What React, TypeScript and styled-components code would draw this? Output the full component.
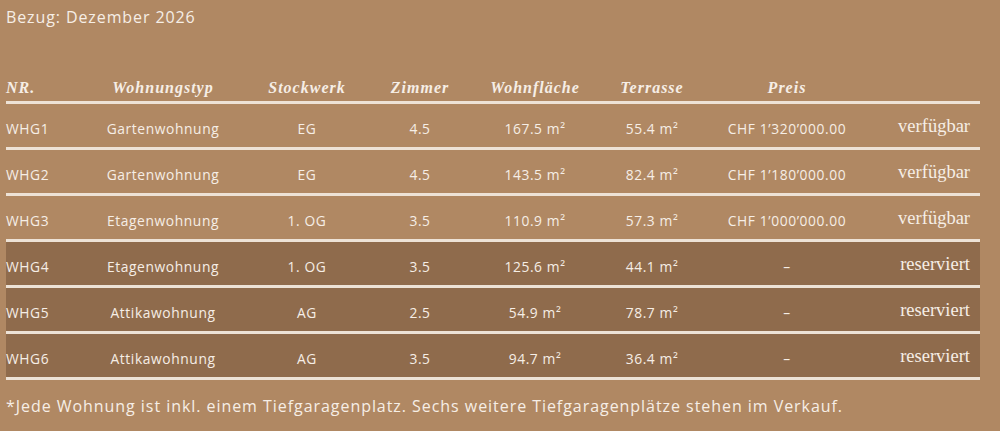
import React from 'react';
import styled, { createGlobalStyle } from 'styled-components';

type Unit = {
  nr: string;
  typ: string;
  stock: string;
  zimmer: string;
  flaeche: string;
  terrasse: string;
  preis: string;
  status: string;
  reserved?: boolean;
};

const units: Unit[] = [
  { nr: 'WHG1', typ: 'Gartenwohnung', stock: 'EG', zimmer: '4.5', flaeche: '167.5 m²', terrasse: '55.4 m²', preis: 'CHF 1’320’000.00', status: 'verfügbar' },
  { nr: 'WHG2', typ: 'Gartenwohnung', stock: 'EG', zimmer: '4.5', flaeche: '143.5 m²', terrasse: '82.4 m²', preis: 'CHF 1’180’000.00', status: 'verfügbar' },
  { nr: 'WHG3', typ: 'Etagenwohnung', stock: '1. OG', zimmer: '3.5', flaeche: '110.9 m²', terrasse: '57.3 m²', preis: 'CHF 1’000’000.00', status: 'verfügbar' },
  { nr: 'WHG4', typ: 'Etagenwohnung', stock: '1. OG', zimmer: '3.5', flaeche: '125.6 m²', terrasse: '44.1 m²', preis: '–', status: 'reserviert', reserved: true },
  { nr: 'WHG5', typ: 'Attikawohnung', stock: 'AG', zimmer: '2.5', flaeche: '54.9 m²', terrasse: '78.7 m²', preis: '–', status: 'reserviert', reserved: true },
  { nr: 'WHG6', typ: 'Attikawohnung', stock: 'AG', zimmer: '3.5', flaeche: '94.7 m²', terrasse: '36.4 m²', preis: '–', status: 'reserviert', reserved: true },
];

const App = () => {
  return (
    <>
      <GlobalStyle />
      <Page>
        <Bezug>Bezug: Dezember 2026</Bezug>

        <Table>
          <HeaderRow>
            <HeadCell $align="left">NR.</HeadCell>
            <HeadCell>Wohnungstyp</HeadCell>
            <HeadCell>Stockwerk</HeadCell>
            <HeadCell>Zimmer</HeadCell>
            <HeadCell>Wohnfläche</HeadCell>
            <HeadCell>Terrasse</HeadCell>
            <HeadCell>Preis</HeadCell>
            <HeadCell />
          </HeaderRow>

          {units.map((u) => (
            <Row key={u.nr} $reserved={u.reserved}>
              <Cell $align="left">{u.nr}</Cell>
              <Cell>{u.typ}</Cell>
              <Cell>{u.stock}</Cell>
              <Cell>{u.zimmer}</Cell>
              <Cell>{u.flaeche}</Cell>
              <Cell>{u.terrasse}</Cell>
              <Cell>{u.preis}</Cell>
              <Status>{u.status}</Status>
            </Row>
          ))}
        </Table>

        <Note>
          *Jede Wohnung ist inkl. einem Tiefgaragenplatz. Sechs weitere Tiefgaragenplätze stehen im Verkauf.
        </Note>
      </Page>
    </>
  );
};

export default App;

/* Styled Components */
const GlobalStyle = createGlobalStyle`
  html, body {
    margin: 0;
    padding: 0;
    background: #b08863;
  }
`;

const Page = styled.div`
  width: 1000px;
  height: 431px;
  box-sizing: border-box;
  padding: 6px 20px 0 6px;
  background: #b08863;
  color: #f6eee6;
  font-family: 'Open Sans', 'Noto Sans', sans-serif;
  overflow: hidden;
`;

const Bezug = styled.div`
  font-size: 16px;
  line-height: 22px;
  letter-spacing: 0.9px;
`;

const Table = styled.div`
  margin-top: 47px;
  width: 974px;
`;

const cols = '85px 144px 144px 82px 148px 86px 184px 101px';

const HeaderRow = styled.div`
  display: grid;
  grid-template-columns: ${cols};
  align-items: end;
  height: 26px;
  border-bottom: 3px solid #ede2d6;
`;

const HeadCell = styled.div<{ $align?: string }>`
  font-family: 'Liberation Serif', 'Times New Roman', serif;
  font-style: italic;
  font-weight: 700;
  font-size: 16px;
  letter-spacing: 1px;
  line-height: 26px;
  padding-bottom: 4px;
  text-align: ${(p) => p.$align || 'center'};
`;

const Row = styled.div<{ $reserved?: boolean }>`
  display: grid;
  grid-template-columns: ${cols};
  align-items: center;
  height: 43px;
  border-bottom: 3px solid #ede2d6;
  background: ${(p) => (p.$reserved ? '#8f6b4c' : 'transparent')};
`;

const Cell = styled.div<{ $align?: string }>`
  font-size: 13.8px;
  letter-spacing: 0.6px;
  text-align: ${(p) => p.$align || 'center'};
  padding-top: 6px;
`;

const Status = styled.div`
  font-family: 'Liberation Serif', 'Times New Roman', serif;
  font-size: 18.5px;
  text-align: right;
  padding-right: 10px;
  padding-top: 2px;
`;

const Note = styled.div`
  margin-top: 15px;
  font-size: 16px;
  letter-spacing: 0.95px;
  line-height: 22px;
`;
